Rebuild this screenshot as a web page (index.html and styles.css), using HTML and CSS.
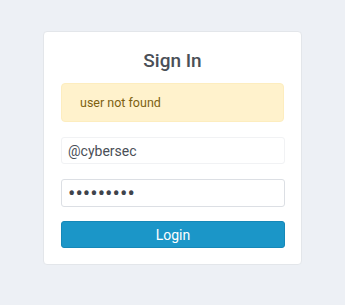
FILE: index.html
```html
<!DOCTYPE html>
<html>
<head>
<meta charset="utf-8">
<link rel="stylesheet" href="styles.css">
</head>
<body>
<div class="card">
  <h1 class="title">Sign In</h1>
  <div class="alert">user not found</div>
  <form class="form">
    <input class="field field-user" type="text" value="@cybersec">
    <input class="field field-pass" type="password" value="secret123">
    <button class="btn" type="button">Login</button>
  </form>
</div>
</body>
</html>
```
FILE: styles.css
```css
html, body {
  margin: 0;
  padding: 0;
  background: #edf0f5;
  font-family: Roboto, "Noto Sans", sans-serif;
}
body {
  padding-top: 31px;
}
.card {
  box-sizing: border-box;
  width: 259px;
  height: 234px;
  margin: 0 auto;
  background: #fff;
  border: 1px solid #e3e6ea;
  border-radius: 4px;
  padding: 17px 17px 16px;
}
.title {
  margin: 0 0 10px;
  height: 24px;
  line-height: 24px;
  font-size: 19px;
  font-weight: 500;
  color: #4a4f57;
  text-align: center;
}
.alert {
  box-sizing: border-box;
  height: 39px;
  padding: 0 18px;
  display: flex;
  align-items: center;
  background: #fff2cc;
  border: 1px solid #fdedbf;
  border-radius: 4px;
  color: #7d6110;
  font-size: 12.5px;
}
.form {
  margin-top: 15px;
  display: flex;
  flex-direction: column;
  gap: 15px;
}
.field {
  box-sizing: border-box;
  width: 224px;
  height: 28px;
  margin: 0;
  padding: 0 6px;
  border: 1px solid #dcdfe4;
  border-radius: 3px;
  background: #fff;
  font-family: Roboto, "Noto Sans", sans-serif;
  font-size: 14px;
  color: #4a4f57;
  outline: none;
}
.field-user {
  border-color: #f1f2f4;
  height: 27px;
}
.field-pass {
  font-size: 22px;
  color: #3f444c;
}
.btn {
  box-sizing: border-box;
  width: 224px;
  height: 27px;
  margin-top: -1px;
  border: 1px solid #1688b8;
  border-radius: 3px;
  background: #1b96c8;
  color: #fff;
  font-family: Roboto, "Noto Sans", sans-serif;
  font-size: 14px;
  padding: 0;
}
```
